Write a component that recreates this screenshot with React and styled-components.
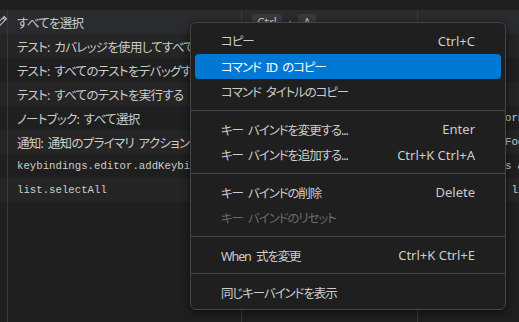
import React from 'react';
import styled, { createGlobalStyle } from 'styled-components';

// Keybindings editor table with the row context menu open

const rows = [
    { command: "すべてを選択", keys: ["Ctrl", "A"], when: "", selected: true },
    { command: "テスト: カバレッジを使用してすべてのテストを実行する", when: "" },
    { command: "テスト: すべてのテストをデバッグする", when: "" },
    { command: "テスト: すべてのテストを実行する", when: "" },
    { command: "ノートブック: すべて選択", when: "notebookEditorFocused" },
    { command: "通知: 通知のプライマリ アクションを切り替える", when: "notificationFocus" },
    { command: "keybindings.editor.addKeybinding", mono: true, when: "inKeybindings && keybindingFocus" },
    { command: "list.selectAll", mono: true, when: "listFocus && listSupportsMultiselect" },
];

const menu = [
    { label: "コピー", shortcut: "Ctrl+C" },
    { label: "コマンド ID のコピー", active: true },
    { label: "コマンド タイトルのコピー" },
    "sep",
    { label: "キー バインドを変更する...", shortcut: "Enter" },
    { label: "キー バインドを追加する...", shortcut: "Ctrl+K Ctrl+A" },
    "sep",
    { label: "キー バインドの削除", shortcut: "Delete" },
    { label: "キー バインドのリセット", disabled: true },
    "sep",
    { label: "When 式を変更", shortcut: "Ctrl+K Ctrl+E" },
    "sep",
    { label: "同じキーバインドを表示" },
];

function Pencil() {
    return (
        <svg width="16" height="16" viewBox="0 0 16 16" fill="none" stroke="#c5c5c5" strokeWidth="1.1">
            <path d="M2.5 13.5 L3.3 10.4 L11.2 2.5 L13.5 4.8 L5.6 12.7 Z" />
            <path d="M9.8 3.9 L12.1 6.2" />
        </svg>
    );
}

export default function App() {
    return (
        <>
            <GlobalStyle />
            <Page>
                <TopStrip />
                <Table>
                    {rows.map((r, i) => (
                        <Row key={i} $selected={r.selected} $odd={i % 2 === 1}>
                            <ActionCell>{r.selected && <Pencil />}</ActionCell>
                            <CommandCell $mono={r.mono}>{r.command}</CommandCell>
                            <KeyCell>
                                {r.keys && <>
                                    <KeyCap>{r.keys[0]}</KeyCap>
                                    <Plus>+</Plus>
                                    <KeyCap>{r.keys[1]}</KeyCap>
                                </>}
                            </KeyCell>
                            <WhenCell>{r.when}</WhenCell>
                        </Row>
                    ))}
                    <Row $filler>
                        <ActionCell />
                        <CommandCell />
                        <KeyCell />
                        <WhenCell />
                    </Row>
                </Table>

                <Menu>
                    {menu.map((m, i) => m === "sep"
                        ? <Separator key={i} />
                        : (
                            <MenuItem key={i} $active={m.active} $disabled={m.disabled}>
                                <Label>{m.label}</Label>
                                {m.shortcut && <span>{m.shortcut}</span>}
                            </MenuItem>
                        ))}
                </Menu>
            </Page>
        </>
    );
}

const GlobalStyle = createGlobalStyle`
    body {
        margin: 0;
        background: #1f1f1f;
        overflow: hidden;
    }
`;

const Page = styled.div`
    position: relative;
    width: 519px;
    height: 322px;
    background: #1f1f1f;
    display: flex;
    flex-direction: column;
    overflow: hidden;
    font-family: "Noto Sans", "Noto Sans CJK JP", sans-serif;
    font-feature-settings: "palt";
    color: #cccccc;
`;

const TopStrip = styled.div`
    height: 10px;
    flex-shrink: 0;
    background: #1f1f1f;
`;

const Table = styled.div`
    flex: 1;
    display: flex;
    flex-direction: column;
`;

const Row = styled.div`
    display: grid;
    grid-template-columns: 8px 234px 176px 1fr;
    height: ${p => p.$filler ? "auto" : "24px"};
    flex: ${p => p.$filler ? 1 : "none"};
    background: ${p => p.$selected ? "#2a2b2e" : p.$odd ? "#252525" : "#1f1f1f"};
    > div {
        border-right: 1px solid #383838;
    }
    > div:last-child {
        border-right: none;
    }
`;

const Cell = styled.div`
    display: flex;
    align-items: center;
    overflow: hidden;
    white-space: nowrap;
    box-sizing: border-box;
`;

const ActionCell = styled(Cell)`
    justify-content: flex-end;
    svg {
        flex-shrink: 0;
        margin-right: -2px;
    }
`;

const CommandCell = styled(Cell)`
    padding-left: 9px;
    font-size: ${p => p.$mono ? "10.7px" : "12.5px"};
    letter-spacing: ${p => p.$mono ? "0" : "-0.7px"};
    word-spacing: ${p => p.$mono ? "0" : "2px"};
    font-family: ${p => p.$mono ? '"Liberation Mono", monospace' : "inherit"};
`;

const KeyCell = styled(Cell)`
    padding-left: 10px;
    align-items: flex-start;
    padding-top: 4px;
`;

const KeyCap = styled.span`
    font-size: 12px;
    line-height: 16px;
    padding: 1px 5px;
    border-radius: 3px;
    background: #3a3a3d;
    border-bottom: 1px solid #2c2c2c;
    color: #cccccc;
`;

const Plus = styled.span`
    font-size: 11px;
    line-height: 18px;
    margin: 0 5px;
`;

const WhenCell = styled(Cell)`
    padding-left: 10px;
    font-family: "Liberation Mono", monospace;
    font-size: 10.7px;
`;

const Menu = styled.div`
    position: absolute;
    left: 190px;
    top: 22px;
    width: 316px;
    box-sizing: border-box;
    padding: 5px 0 3px;
    background: #1f1f1f;
    border: 1px solid #454545;
    border-radius: 6px;
    box-shadow: 0 2px 8px rgba(0, 0, 0, 0.6);
`;

const MenuItem = styled.div`
    display: flex;
    align-items: center;
    justify-content: space-between;
    height: 25.5px;
    margin: 0 4px;
    padding: 0 26px;
    border-radius: 4px;
    font-size: 13px;
    background: ${p => p.$active ? "#0078d4" : "transparent"};
    color: ${p => p.$active ? "#ffffff" : p.$disabled ? "#6b6b6b" : "#cccccc"};
`;

const Label = styled.span`
    font-size: 12.5px;
    letter-spacing: -1.1px;
    word-spacing: 3px;
`;

const Separator = styled.div`
    height: 1px;
    margin: 5px 0 6px;
    background: #454545;
`;
